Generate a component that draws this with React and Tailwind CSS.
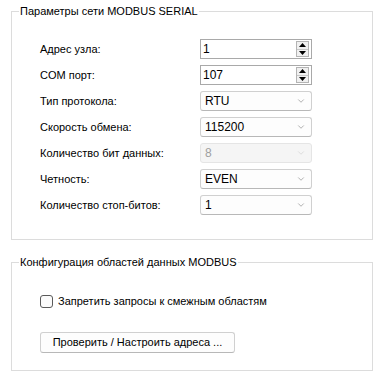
import { ChevronDown } from 'lucide-react'

/* Диалог настроек MODBUS: две группы — параметры линии и области данных */

const ROWS = [
  { label: 'Адрес узла:', kind: 'spin', value: '1' },
  { label: 'COM порт:', kind: 'spin', value: '107' },
  { label: 'Тип протокола:', kind: 'select', value: 'RTU' },
  { label: 'Скорость обмена:', kind: 'select', value: '115200' },
  { label: 'Количество бит данных:', kind: 'select', value: '8', disabled: true },
  { label: 'Четность:', kind: 'select', value: 'EVEN' },
  { label: 'Количество стоп-битов:', kind: 'select', value: '1' },
]

function Spin({ value }) {
  return (
    <div className="flex h-[20px] w-[112px] items-center border border-[#a9a9a9] bg-white pl-[2px] pr-[2px]">
      <span className="flex-1 text-[12px] leading-none">{value}</span>
      <div className="flex h-[16px] w-[13px] flex-col border border-[#b4b4b4] bg-[#f0f0f0]">
        <div className="flex flex-1 items-center justify-center border-b border-[#c8c8c8]">
          <svg width="7" height="4" viewBox="0 0 7 4"><path d="M0 4 L3.5 0 L7 4 Z" fill="#000" /></svg>
        </div>
        <div className="flex flex-1 items-center justify-center">
          <svg width="7" height="4" viewBox="0 0 7 4"><path d="M0 0 L3.5 4 L7 0 Z" fill="#000" /></svg>
        </div>
      </div>
    </div>
  )
}

function Select({ value, disabled }) {
  return (
    <div className={`flex h-[20px] w-[112px] items-center rounded-[3px] border pl-[4px] pr-[5px] ${disabled ? 'border-[#e5e5e5] bg-[#f5f5f5] text-[#a0a0a0]' : 'border-[#d0d0d0] border-b-[#b8b8b8] bg-[#fdfdfd] text-black'}`}>
      <span className="flex-1 text-[12px] leading-none">{value}</span>
      <ChevronDown size={10} strokeWidth={1.3} className={disabled ? 'text-[#c8c8c8]' : 'text-[#707070]'} />
    </div>
  )
}

export default function App() {
  return (
    <div className="h-[380px] w-[381px] bg-white pt-[4px] pl-[11px] text-[11px] text-black" style={{ fontFamily: '"Liberation Sans", Arial, sans-serif' }}>
      <fieldset className="m-0 w-[362px] border border-[#dcdcdc] px-0 pt-[21px] pb-[24px]">
        <legend className="ml-[7px] bg-white px-[1px] leading-[14px]">Параметры сети MODBUS SERIAL</legend>
        <div className="flex flex-col gap-[6px] pl-[28px]">
          {ROWS.map(r => (
            <div key={r.label} className="flex h-[20px] items-center">
              <span className="w-[160px]">{r.label}</span>
              {r.kind === 'spin' ? <Spin value={r.value} /> : <Select value={r.value} disabled={r.disabled} />}
            </div>
          ))}
        </div>
      </fieldset>

      <fieldset className="m-0 mt-[15px] w-[362px] border border-[#dcdcdc] px-0 pt-[24px] pb-[17px]">
        <legend className="ml-[7px] bg-white px-[1px] leading-[14px]">Конфигурация областей данных MODBUS</legend>
        <div className="flex flex-col gap-[22px] pl-[28px]">
          <label className="flex items-center gap-[5px]">
            <span className="h-[13px] w-[13px] rounded-[3px] border border-[#5a5a5a] bg-[#fbfbfb]" />
            <span>Запретить запросы к смежным областям</span>
          </label>
          <button className="flex h-[21px] w-[195px] items-center justify-center rounded-[3px] border border-[#d0d0d0] border-b-[#b8b8b8] bg-[#fdfdfd]">
            Проверить / Настроить адреса ...
          </button>
        </div>
      </fieldset>
    </div>
  )
}
